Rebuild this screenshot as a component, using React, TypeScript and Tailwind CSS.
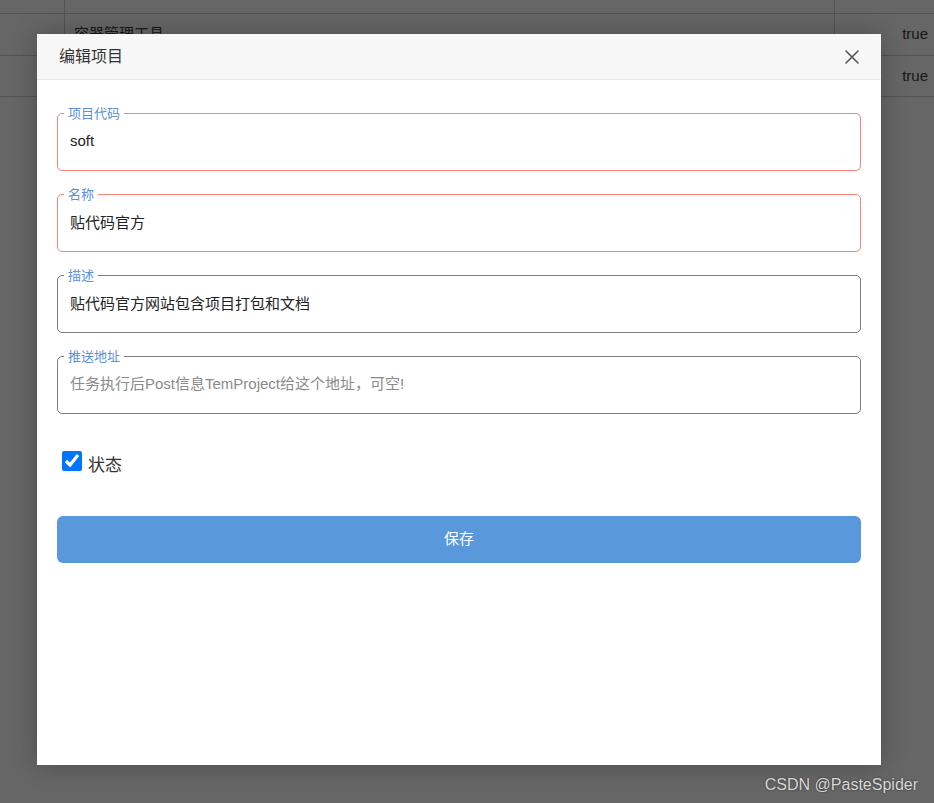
import React from "react";

const font = { fontFamily: '"Liberation Sans", "Noto Sans CJK SC", sans-serif' };

function Field({ label, value, placeholder, error }: { label: string; value?: string; placeholder?: string; error?: boolean }) {
  return (
    <fieldset
      className={`m-0 rounded-[5px] border px-[6px] pb-[14px] pt-0 ${error ? "border-[#f8857a]" : "border-[#7d7d7d]"}`}
    >
      <legend className="px-[4px] text-[13px] leading-[17px] text-[#5b8fd6]">{label}</legend>
      <input
        readOnly
        value={value ?? ""}
        placeholder={placeholder}
        className="mt-[2px] block h-[32px] w-full bg-transparent px-[6px] text-[15px] text-[#222] outline-none placeholder:text-[#8a8a8a]"
      />
    </fieldset>
  );
}

export default function App() {
  return (
    <div className="relative h-[803px] w-[934px] overflow-hidden bg-white text-[15px]" style={font}>
      {/* background table */}
      <div className="flex flex-col text-[#404040]">
        <div className="flex h-[14px] border-b border-[#cfcfcf]">
          <div className="w-[65px] border-r border-[#cfcfcf]" />
          <div className="w-[770px] border-r border-[#cfcfcf]" />
          <div className="flex-1" />
        </div>
        <div className="flex h-[42px] border-b border-[#cfcfcf]">
          <div className="w-[65px] border-r border-[#cfcfcf]" />
          <div className="flex w-[770px] items-center border-r border-[#cfcfcf] pl-[9px]">容器管理工具</div>
          <div className="flex flex-1 items-center justify-end pr-[6px]">true</div>
        </div>
        <div className="flex h-[41px] border-b border-[#cfcfcf]">
          <div className="w-[65px] border-r border-[#cfcfcf]" />
          <div className="flex w-[770px] items-center border-r border-[#cfcfcf] pl-[9px]">容器管理工具</div>
          <div className="flex flex-1 items-center justify-end pr-[6px]">true</div>
        </div>
      </div>

      {/* overlay */}
      <div className="absolute inset-0 bg-black/60" />

      {/* modal */}
      <div className="absolute left-[37px] top-[34px] flex h-[731px] w-[844px] flex-col bg-white shadow-[0_0_24px_rgba(0,0,0,0.25)]">
        <div className="flex h-[46px] items-center justify-between border-b border-[#e9e9e9] bg-[#f7f7f7] pl-[22px] pr-[21px]">
          <span className="text-[16px] text-[#333]">编辑项目</span>
          <svg width="16" height="16" viewBox="0 0 16 16" className="text-[#555]">
            <path d="M2 2L14 14M14 2L2 14" stroke="currentColor" strokeWidth="1.6" strokeLinecap="round" />
          </svg>
        </div>
        <div className="flex flex-col gap-[15px] px-[20px] pt-[25px]">
          <Field label="项目代码" value="soft" error />
          <Field label="名称" value="贴代码官方" error />
          <Field label="描述" value="贴代码官方网站包含项目打包和文档" />
          <Field label="推送地址" placeholder="任务执行后Post信息TemProject给这个地址，可空!" />
        </div>
        <label className="ml-[25px] mt-[37px] flex items-start gap-[6px]">
          <input type="checkbox" defaultChecked className="m-0 h-[20px] w-[20px] accent-[#0075ff]" />
          <span className="mt-[5px] text-[17px] leading-[20px] text-[#333]">状态</span>
        </label>
        <div className="px-[20px] pt-[40px]">
          <button className="flex h-[47px] w-full items-center justify-center rounded-[6px] bg-[#5a98dc] text-[15px] text-white">
            保存
          </button>
        </div>
      </div>

      {/* watermark */}
      <div
        className="absolute bottom-[6px] right-[16px] text-[16px] text-[#d8d8d8] [text-shadow:0_0_2px_rgba(0,0,0,0.6)]"
        style={{ fontFamily: '"Liberation Sans", Arial, sans-serif' }}
      >
        CSDN @PasteSpider
      </div>
    </div>
  );
}
